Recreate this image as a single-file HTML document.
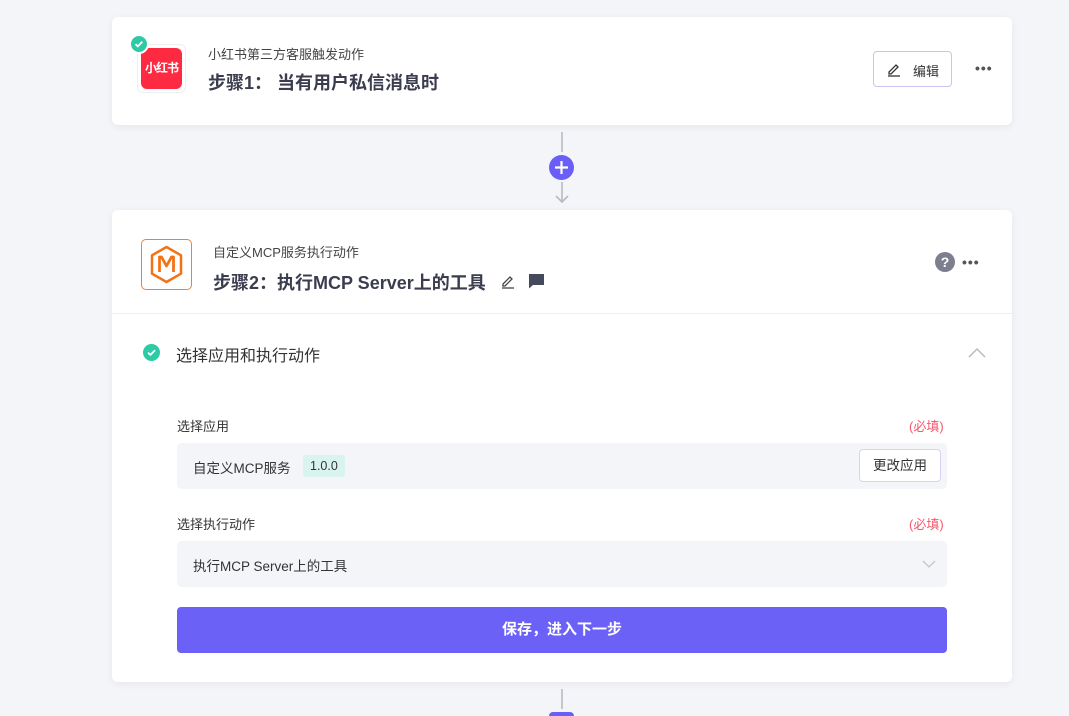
<!DOCTYPE html>
<html><head><meta charset="utf-8"><style>
*{box-sizing:border-box;margin:0;padding:0}
html{width:1069px;height:716px;overflow:hidden}
body{width:1069px;height:716px;overflow:hidden;background:#f4f5f9;font-family:"Liberation Sans","Noto Sans CJK SC",sans-serif;color:#333;position:relative}
.card{position:absolute;left:112px;width:900px;background:#fff;border-radius:6px;box-shadow:0 2px 8px rgba(0,0,0,.06)}
.abs{position:absolute}
.sub{font-size:13px;color:#444}
.title{font-size:18px;font-weight:bold;color:#3b3d4f}
.dots{font-size:14px;color:#555;letter-spacing:1px;font-weight:bold}
.lbl{font-size:13px;color:#333}
.req{font-size:13px;color:#f5586b}
.field{position:absolute;left:65px;width:770px;height:46px;background:#f4f5f9;border-radius:5px}
</style></head><body>

<div class="card" style="top:17px;height:108px">
  <div class="abs" style="left:25px;top:27px;width:49px;height:49px;border:1px solid #eee;border-radius:6px;background:#fff"></div>
  <div class="abs" style="left:29px;top:31px;width:41px;height:41px;background:#fe2a42;border-radius:6px;color:#fff;font-size:12px;font-weight:bold;line-height:41px;text-align:center;letter-spacing:-1px">小红书</div>
  <div class="abs" style="left:17px;top:17px;width:20px;height:20px;border-radius:50%;background:#2ecaa6;border:2px solid #fff">
    <svg width="16" height="16" viewBox="0 0 16 16" style="position:absolute;left:0;top:0"><path d="M4.5 8.2l2.3 2.2 4.5-4.6" stroke="#fff" stroke-width="1.8" fill="none"/></svg></div>
  <div class="abs sub" style="left:96px;top:27px">小红书第三方客服触发动作</div>
  <div class="abs title" style="left:96px;top:52px">步骤1： 当有用户私信消息时</div>
  <div class="abs" style="left:761px;top:34px;width:79px;height:36px;border:1px solid #c9c3f5;border-radius:4px;font-size:13px;color:#333">
    <svg width="16" height="16" viewBox="0 0 16 16" style="position:absolute;left:12px;top:9px"><path d="M3 11l7-7 2 2-7 7H3z" stroke="#333" stroke-width="1.3" fill="none"/><path d="M2 15h12" stroke="#333" stroke-width="1.3"/></svg>
    <span style="position:absolute;left:39px;top:9px">编辑</span></div>
  <div class="abs dots" style="left:863px;top:43px">•••</div>
</div>

<div class="abs" style="left:561px;top:132px;width:2px;height:20px;background:#c5c7cf"></div>
<div class="abs" style="left:549px;top:155px;width:25px;height:25px;border-radius:50%;background:#6b5ef6">
  <svg width="25" height="25" viewBox="0 0 25 25"><path d="M12.5 6v13M6 12.5h13" stroke="#fff" stroke-width="2.2"/></svg></div>
<svg class="abs" style="left:553px;top:182px" width="18" height="22" viewBox="0 0 18 22"><path d="M9 0v19M3 14l6 6 6-6" stroke="#b8bac2" stroke-width="1.6" fill="none"/></svg>

<div class="card" style="top:210px;height:472px">
  <div class="abs" style="left:29px;top:29px;width:51px;height:51px;border:1px solid #f77f29;border-radius:5px">
    <svg width="49" height="49" viewBox="0 0 49 49"><path d="M24.5 7L39 15.3v18.4L24.5 42 10 33.7V15.3z" stroke="#f47216" stroke-width="2.5" fill="none" stroke-linejoin="round"/><path d="M17.5 32V17h2l5 9 5-9h2v15" stroke="#f47216" stroke-width="2.8" fill="none" stroke-linejoin="round"/></svg></div>
  <div class="abs sub" style="left:101px;top:32px">自定义MCP服务执行动作</div>
  <div class="abs title" style="left:101px;top:59px">步骤2：执行MCP Server上的工具</div>
  <svg class="abs" style="left:388px;top:63px" width="16" height="16" viewBox="0 0 16 16"><path d="M3 11l7-7 2 2-7 7H3z" stroke="#444" stroke-width="1.3" fill="none"/><path d="M2 15h12" stroke="#444" stroke-width="1.3"/></svg>
  <svg class="abs" style="left:416px;top:63px" width="17" height="16" viewBox="0 0 17 16"><path d="M1 1h15v11H5l-4 3.5z" fill="#454a5e"/></svg>
  <div class="abs" style="left:823px;top:42px;width:20px;height:20px;border-radius:50%;background:#7d7f8e;color:#fff;font-size:14px;font-weight:bold;text-align:center;line-height:20px">?</div>
  <div class="abs dots" style="left:850px;top:44px">•••</div>
  <div class="abs" style="left:0;top:103px;width:900px;height:1px;background:#eceef2"></div>

  <div class="abs" style="left:31px;top:134px;width:17px;height:17px;border-radius:50%;background:#2ecaa6">
    <svg width="17" height="17" viewBox="0 0 17 17"><path d="M5 8.7l2.4 2.2 4.6-4.7" stroke="#fff" stroke-width="1.8" fill="none"/></svg></div>
  <div class="abs" style="left:64px;top:132px;font-size:16px;color:#333">选择应用和执行动作</div>
  <svg class="abs" style="left:856px;top:137px" width="18" height="12" viewBox="0 0 18 12"><path d="M1 10l8-8 8 8" stroke="#b5bac6" stroke-width="1.5" fill="none"/></svg>

  <div class="abs lbl" style="left:65px;top:206px">选择应用</div>
  <div class="abs req" style="left:797px;top:206px">(必填)</div>
  <div class="field" style="top:233px">
    <div class="abs" style="left:16px;top:14px;font-size:13.5px;color:#333">自定义MCP服务</div>
    <div class="abs" style="left:126px;top:12px;height:22px;padding:0 7px;background:#d9f4ef;border-radius:3px;font-size:12.5px;line-height:22px;color:#333">1.0.0</div>
    <div class="abs" style="left:682px;top:6px;width:82px;height:33px;background:#fff;border:1px solid #d7d3f4;border-radius:4px;font-size:13.5px;text-align:center;line-height:31px;color:#333">更改应用</div>
  </div>

  <div class="abs lbl" style="left:65px;top:304px">选择执行动作</div>
  <div class="abs req" style="left:797px;top:304px">(必填)</div>
  <div class="field" style="top:331px">
    <div class="abs" style="left:16px;top:14px;font-size:13.5px;color:#333">执行MCP Server上的工具</div>
    <svg class="abs" style="left:745px;top:19px" width="14" height="9" viewBox="0 0 14 9"><path d="M1 1l6 6 6-6" stroke="#c2c5cd" stroke-width="1.3" fill="none"/></svg>
  </div>

  <div class="abs" style="left:65px;top:397px;width:770px;height:46px;background:#6c61f6;border-radius:4px;color:#fff;font-size:15px;font-weight:bold;text-align:center;line-height:46px">保存，进入下一步</div>
</div>

<div class="abs" style="left:561px;top:689px;width:2px;height:20px;background:#c5c7cf"></div>
<div class="abs" style="left:549px;top:712px;width:25px;height:4px;border-radius:12px 12px 0 0;background:#6b5ef6"></div>
</body></html>
